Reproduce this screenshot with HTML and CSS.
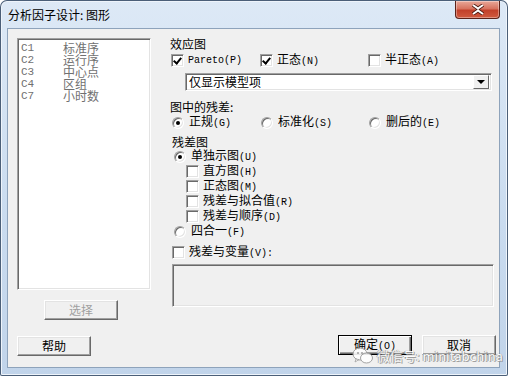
FILE: index.html
```html
<!DOCTYPE html>
<html lang="zh-CN">
<head>
  <meta charset="UTF-8" />
  <title>分析因子设计: 图形</title>
  <link rel="stylesheet" href="styles.css">
</head>
<body>

  <div class="window">
    <div class="titlebar">
      <span class="title">分析因子设计: 图形</span>
      <div class="close">
        <svg width="14" height="11" viewBox="0 0 14 11">
          <path d="M2 1 L7 4.5 L12 1 M2 10 L7 6.5 L12 10" stroke="#4a1a12" stroke-width="3.6" fill="none"/>
          <path d="M2 1 L7 4.5 L12 1 M2 10 L7 6.5 L12 10" stroke="#fff" stroke-width="2" fill="none"/>
        </svg>
      </div>
    </div>

    <div class="client">
      <div class="left">
        <div class="listbox">
          <div class="item"><span class="code">C1</span><span>标准序</span></div>
          <div class="item"><span class="code">C2</span><span>运行序</span></div>
          <div class="item"><span class="code">C3</span><span>中心点</span></div>
          <div class="item"><span class="code">C4</span><span>区组</span></div>
          <div class="item"><span class="code">C7</span><span>小时数</span></div>
        </div>
        <button class="btn btn-select" disabled>选择</button>
        <button class="btn btn-help">帮助</button>
      </div>

      <div class="right">
        <div class="label">效应图</div>
        <div class="row grid3 first">
          <label class="opt"><span class="check on"></span><span class="k">Pareto(P)</span></label>
          <label class="opt"><span class="check on"></span><span>正态<span class="k">(N)</span></span></label>
          <label class="opt"><span class="check"></span><span>半正态<span class="k">(A)</span></span></label>
        </div>

        <div class="combo">
          <span class="combo-text">仅显示模型项</span>
          <span class="combo-arrow"></span>
        </div>

        <div class="label resid">图中的残差:</div>
        <div class="row grid3 radios">
          <label class="opt"><span class="radio on"></span><span>正规<span class="k">(G)</span></span></label>
          <label class="opt"><span class="radio"></span><span>标准化<span class="k">(S)</span></span></label>
          <label class="opt"><span class="radio"></span><span>删后的<span class="k">(E)</span></span></label>
        </div>

        <div class="label plots">残差图</div>
        <div class="plot-rows">
          <label class="opt prow indent-r"><span class="radio on"></span><span>单独示图<span class="k">(U)</span></span></label>
          <label class="opt prow indent-c"><span class="check"></span><span>直方图<span class="k">(H)</span></span></label>
          <label class="opt prow indent-c"><span class="check"></span><span>正态图<span class="k">(M)</span></span></label>
          <label class="opt prow indent-c"><span class="check"></span><span>残差与拟合值<span class="k">(R)</span></span></label>
          <label class="opt prow indent-c"><span class="check"></span><span>残差与顺序<span class="k">(D)</span></span></label>
          <label class="opt prow indent-r"><span class="radio"></span><span>四合一<span class="k">(F)</span></span></label>
        </div>

        <label class="opt row vars"><span class="check"></span><span>残差与变量<span class="k">(V):</span></span></label>
        <div class="varbox"></div>

        <div class="actions">
          <button class="btn btn-default">确定<span class="k">(O)</span></button>
          <button class="btn">取消</button>
        </div>
      </div>
    </div>

    <div class="watermark">
      <svg width="22" height="18" viewBox="0 0 22 18">
        <ellipse cx="8" cy="7" rx="7" ry="6" fill="#fff" stroke="#9a9a9a" stroke-width="1"/>
        <path d="M4 12 L3 15 L7 12.6 Z" fill="#fff" stroke="#9a9a9a" stroke-width="0.8"/>
        <ellipse cx="14.5" cy="11" rx="6" ry="5" fill="#fff" stroke="#9a9a9a" stroke-width="1"/>
        <circle cx="6" cy="6" r="0.9" fill="#9a9a9a"/>
        <circle cx="10" cy="6" r="0.9" fill="#9a9a9a"/>
      </svg>
      <span>微信号: minitabchina</span>
    </div>
  </div>

</body>
</html>
```

FILE: styles.css
```css
body {
  margin: 0;
  background: #fff;
  font-family: "Noto Sans CJK SC", sans-serif;
  font-size: 12px;
  color: #000;
}

.window {
  position: relative;
  width: 508px;
  height: 376px;
  box-sizing: border-box;
  background: linear-gradient(#dde9f6, #c9dbef 60%, #c1d4ea);
  border-radius: 7px 7px 2px 2px;
  box-shadow: inset 0 0 0 1px #4b5f78, inset 0 0 0 2px #eef4fb;
  overflow: hidden;
}

.titlebar {
  height: 28px;
  display: flex;
  justify-content: space-between;
  align-items: flex-start;
  padding: 0 8px 0 8px;
}

.title {
  line-height: 14px;
  margin-top: 8px;
  font-size: 12px;
}

.close {
  width: 45px;
  height: 18px;
  margin-top: 1px;
  box-sizing: border-box;
  border: 1px solid #5c2219;
  border-top: none;
  border-radius: 0 0 4px 4px;
  background: linear-gradient(#e9a899, #d7735f 45%, #c2402a 55%, #d05a3f);
  box-shadow: inset 0 0 0 1px rgba(255,255,255,0.35);
  display: flex;
  justify-content: center;
  align-items: center;
}

.client {
  height: 340px;
  margin: 0 8px 0 7px;
  box-sizing: border-box;
  border: 1px solid #8ea3bb;
  background: #f0f0f0;
  padding: 8px 0 0 9px;
  display: flex;
  gap: 19px;
}

/* left column */
.left {
  width: 134px;
  margin-top: 1px;
  display: flex;
  flex-direction: column;
  align-items: flex-start;
}

.listbox {
  width: 134px;
  height: 252px;
  box-sizing: border-box;
  background: #fff;
  border: 1px solid;
  border-color: #a0a0a0 #fff #fff #a0a0a0;
  box-shadow: inset 1px 1px 0 #696969, inset -1px -1px 0 #e3e3e3;
  padding: 3px 3px;
}

.item {
  display: flex;
  height: 12px;
  line-height: 12px;
  color: #707070;
}

.code {
  width: 42px;
  font-family: "Liberation Mono", monospace;
  font-size: 11px;
}

.btn {
  width: 74px;
  height: 20px;
  box-sizing: border-box;
  background: #f0f0f0;
  border: 1px solid;
  border-color: #fff #696969 #696969 #fff;
  box-shadow: inset -1px -1px 0 #a0a0a0, inset 1px 1px 0 #e3e3e3;
  font-family: "Noto Sans CJK SC", sans-serif;
  font-size: 12px;
  line-height: 16px;
  padding: 0;
  color: #000;
}

.btn-select {
  margin: 10px 0 0 27px;
  color: #a0a0a0;
}

.btn-help {
  margin-top: 16px;
}

.btn-default {
  border: 1px solid #000;
  box-shadow: inset 1px 1px 0 #fff, inset -1px -1px 0 #696969, inset -2px -2px 0 #a0a0a0;
}

/* right column */
.right {
  width: 326px;
  display: flex;
  flex-direction: column;
}

.label {
  height: 14px;
  line-height: 14px;
}

.row {
  height: 14px;
}

.grid3 {
  display: grid;
  grid-template-columns: 89px 108px auto;
}

.first {
  margin: 1px 0 0 1px;
}

.opt {
  display: flex;
  align-items: center;
  gap: 4px;
  line-height: 14px;
  white-space: nowrap;
}

.k {
  font-family: "Liberation Mono", monospace;
  font-size: 10px;
}

.check {
  width: 13px;
  height: 13px;
  flex: none;
  box-sizing: border-box;
  background: #fff;
  border: 1px solid;
  border-color: #a0a0a0 #fff #fff #a0a0a0;
  box-shadow: inset 1px 1px 0 #696969, inset -1px -1px 0 #e3e3e3;
  position: relative;
}

.check.on::after {
  content: "";
  position: absolute;
  left: 3px;
  top: 1px;
  width: 3px;
  height: 6px;
  border: solid #000;
  border-width: 0 2px 2px 0;
  transform: rotate(40deg);
}

.radio {
  width: 12px;
  height: 12px;
  flex: none;
  box-sizing: border-box;
  border-radius: 50%;
  background: #fff;
  border: 1px solid;
  border-color: #a0a0a0 #fff #fff #a0a0a0;
  box-shadow: inset 1px 1px 0 #696969, inset -1px -1px 0 #e3e3e3;
  position: relative;
  margin-right: 1px;
}

.radio.on::after {
  content: "";
  position: absolute;
  left: 3px;
  top: 3px;
  width: 4px;
  height: 4px;
  border-radius: 50%;
  background: #000;
}

.combo {
  margin: 7px 0 0 15px;
  width: 307px;
  height: 18px;
  box-sizing: border-box;
  background: #fff;
  border: 1px solid;
  border-color: #a0a0a0 #fff #fff #a0a0a0;
  box-shadow: inset 1px 1px 0 #696969, inset -1px -1px 0 #e3e3e3;
  display: flex;
  justify-content: space-between;
  align-items: center;
  padding: 0 2px 0 3px;
}

.combo-text {
  line-height: 14px;
}

.combo-arrow {
  width: 16px;
  height: 14px;
  box-sizing: border-box;
  background: #f0f0f0;
  border: 1px solid;
  border-color: #fff #696969 #696969 #fff;
  position: relative;
}

.combo-arrow::after {
  content: "";
  position: absolute;
  left: 3px;
  top: 4px;
  border: 4px solid transparent;
  border-top: 4px solid #000;
  border-bottom: none;
}

.resid {
  margin-top: 9px;
}

.radios {
  margin-left: 2px;
}

.plots {
  margin: 7px 0 0 2px;
}

.prow {
  height: 15px;
}

.indent-r {
  margin-left: 4px;
}

.indent-c {
  margin-left: 16px;
}

.vars {
  margin: 6px 0 0 2px;
}

.varbox {
  margin: 5px 0 0 2px;
  width: 322px;
  height: 43px;
  box-sizing: border-box;
  border: 1px solid;
  border-color: #a0a0a0 #fff #fff #a0a0a0;
  box-shadow: inset 1px 1px 0 #696969, inset -1px -1px 0 #e3e3e3;
  background: #f0f0f0;
}

.actions {
  margin: 28px 0 0 168px;
  display: flex;
  gap: 10px;
}

/* watermark over the buttons */
.watermark {
  position: absolute;
  left: 352px;
  top: 346px;
  display: flex;
  align-items: center;
  gap: 3px;
  color: #fff;
  font-size: 13px;
  text-shadow: 0 0 1px #7a7a7a, 1px 1px 0 #9a9a9a, -1px 0 0 #b0b0b0;
  opacity: 0.9;
}
```
